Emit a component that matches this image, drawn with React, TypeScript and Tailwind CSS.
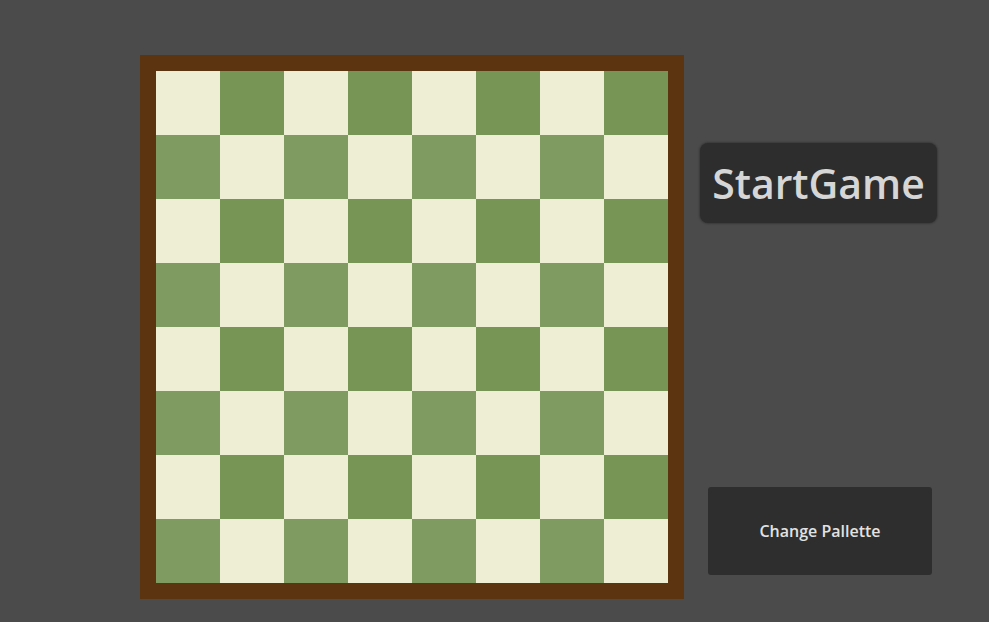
import React from "react"

const LIGHT = "bg-[#eeeed5]"

function Square({ row, col }: { row: number; col: number }) {
  const isLight = (row + col) % 2 === 0
  let cls = LIGHT
  if (!isLight) cls = row % 2 === 0 ? "bg-[#779554]" : "bg-[#809b62]"
  return <div className={`w-16 h-16 ${cls}`} />
}

export default function App() {
  const rows = Array.from({ length: 8 }, (_, i) => i)

  return (
    <div className="w-full h-[622px] bg-[#4b4b4b] flex pt-[55px] pl-[140px] font-['Open_Sans',sans-serif]">
      <div className="border-[16px] border-[#5c3410] h-fit">
        <div className="grid grid-cols-8">
          {rows.map((r) => rows.map((c) => <Square key={`${r}-${c}`} row={r} col={c} />))}
        </div>
      </div>

      <div className="ml-4 w-[240px] flex flex-col items-start">
        <button className="mt-[88px] w-[237px] h-[80px] rounded-lg bg-[#2d2d2d] text-[#d6d6d6] text-[41px] font-semibold leading-none shadow-[0_0_2px_1px_rgba(0,0,0,0.25)] flex items-center justify-center">
          StartGame
        </button>
        <button className="mt-[264px] ml-2 w-[224px] h-[88px] rounded-[3px] bg-[#2e2e2e] text-[#e2e2e2] text-[16px] font-semibold flex items-center justify-center">
          Change Pallette
        </button>
      </div>
    </div>
  )
}
